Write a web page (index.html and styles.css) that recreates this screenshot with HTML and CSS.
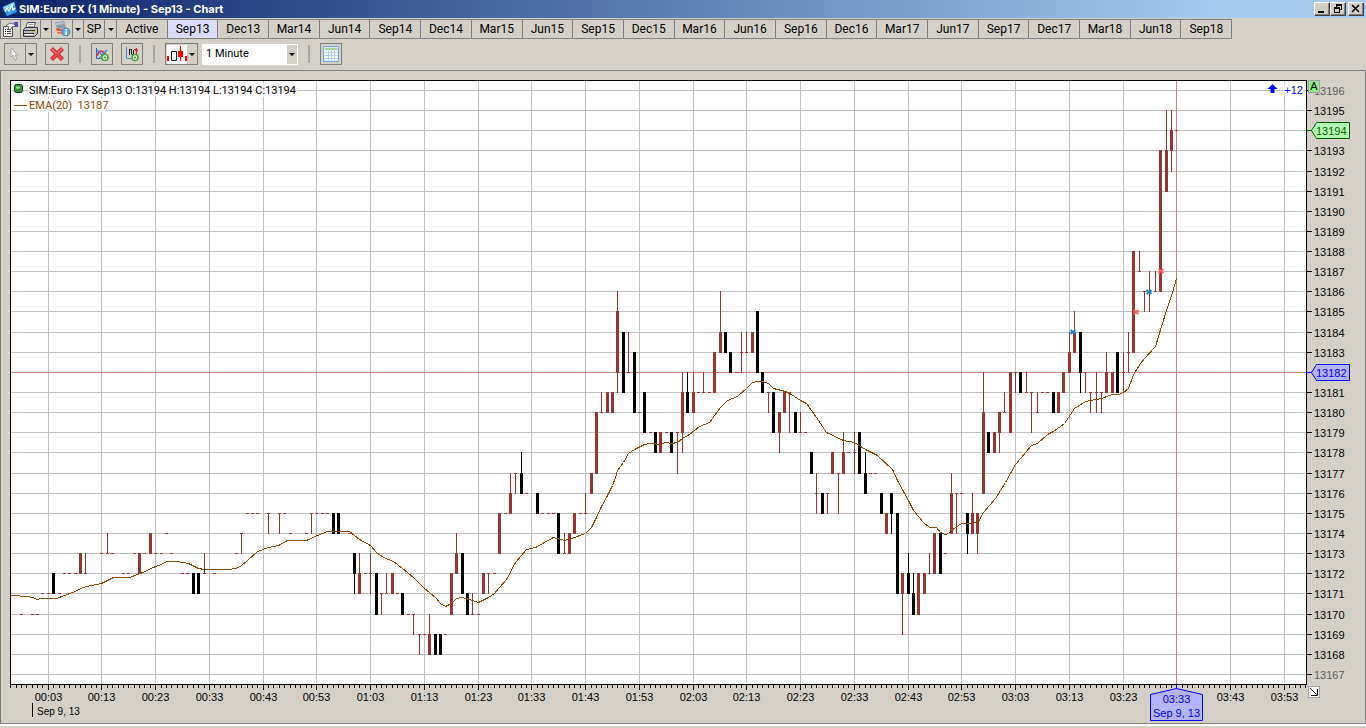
FILE: index.html
```html
<!DOCTYPE html>
<html lang="en">
<head>
<meta charset="utf-8">
<title>SIM:Euro FX (1 Minute) - Sep13 - Chart</title>
<link rel="stylesheet" href="styles.css">
</head>
<body>
<header class="titlebar">
  <svg class="app-icon" width="16" height="16" viewBox="0 0 16 16" aria-hidden="true">
    <path d="M1 6 12 1l3 10-10 4z" fill="#2f9fe8"/>
    <path d="M1 6 12 1l1 3-11 6z" fill="#7cd0ff"/>
    <path d="M3 11l2-4 2 3 3-6 1 5 2-2" fill="none" stroke="#fff" stroke-width="1.3"/>
  </svg>
  <h1 class="title">SIM:Euro FX (1 Minute) - Sep13 - Chart</h1>
  <div class="window-controls">
    <button class="win-btn" type="button" aria-label="Minimize"><svg width="12" height="10" viewBox="0 0 12 10"><path d="M2 7h6v2H2z"/></svg></button>
    <button class="win-btn" type="button" aria-label="Restore"><svg width="12" height="10" viewBox="0 0 12 10"><path d="M4 0h6v6H8V5h1V2H5v1H4zM2 3h6v6H2zM3 5v3h4V5z" fill-rule="evenodd"/></svg></button>
    <button class="win-btn win-close" type="button" aria-label="Close"><svg width="12" height="10" viewBox="0 0 12 10"><path d="M2 1l7 7M9 1L2 8" stroke="#000" stroke-width="1.6"/></svg></button>
  </div>
</header>

<nav class="contract-bar">
  <button class="cell icon-cell" type="button" aria-label="Properties">
    <svg width="17" height="17" viewBox="0 0 17 17">
      <path d="M1.500 5.500h9v10h-9z" fill="#fff" stroke="#555"/>
      <path d="M3 8.500h1m1 0h4M3 10.500h1m1 0h4M3 12.500h1m1 0h4" stroke="#444"/>
      <path d="M4 5l4-3 4 1 2 2-4 1-2 3-2-1 1-2z" fill="#fff" stroke="#444" stroke-width=".8"/>
      <path d="M12 1h4v5h-3z" fill="#4a4fb5"/>
    </svg>
  </button>
  <button class="cell icon-cell printer" type="button" aria-label="Print">
    <svg width="17" height="17" viewBox="0 0 17 17">
      <path d="M5.500 1.500h8l-2 6h-8z" fill="#fff" stroke="#555"/>
      <path d="M6.500 3.500h5M6 5.500h5" stroke="#999"/>
      <path d="M1.500 8.500l2-2h12v6l-3 3h-11z" fill="#bcbcbc" stroke="#333"/>
      <path d="M2 9.500h11M2 12.500h10" stroke="#333"/>
      <path d="M3 13h8v1H3z" fill="#fff"/><path d="M10 10.500h2" stroke="#d9b91a"/>
    </svg>
  </button>
  <button class="cell drop" type="button" aria-label="Print options"><span class="caret"></span></button>
  <button class="cell icon-cell wide" type="button" aria-label="Data">
    <svg width="18" height="18" viewBox="0 0 18 18">
      <path d="M2 2l9-1 2 7-9 1z" fill="#8c9aab"/><path d="M3 3l7-1 1 2-8 1z" fill="#b9c6d4"/>
      <path d="M3 9c3-2 5 2 8 0l1 2c-3 2-5-2-8 0z" fill="#e33d25"/>
      <path d="M4 12c3-2 5 2 8 0l1 2c-3 2-5-2-8 0z" fill="#f06d42"/>
      <circle cx="13" cy="12" r="4" fill="#65a9e8" stroke="#2a6fc0" stroke-width=".6"/>
      <path d="M12.500 9h1.600v1.500h-1.600zM12.200 11.500h1.800V15h-1.800z" fill="#fff"/>
    </svg>
  </button>
  <button class="cell drop" type="button" aria-label="Data options"><span class="caret"></span></button>
  <button class="cell sp" type="button">SP</button>
  <button class="cell drop last" type="button" aria-label="SP options"><span class="caret"></span></button>
  <div class="tabs">
    <button class="tab" type="button">Active</button>
    <button class="tab selected" type="button">Sep13</button>
    <button class="tab" type="button">Dec13</button>
    <button class="tab" type="button">Mar14</button>
    <button class="tab" type="button">Jun14</button>
    <button class="tab" type="button">Sep14</button>
    <button class="tab" type="button">Dec14</button>
    <button class="tab" type="button">Mar15</button>
    <button class="tab" type="button">Jun15</button>
    <button class="tab" type="button">Sep15</button>
    <button class="tab" type="button">Dec15</button>
    <button class="tab" type="button">Mar16</button>
    <button class="tab" type="button">Jun16</button>
    <button class="tab" type="button">Sep16</button>
    <button class="tab" type="button">Dec16</button>
    <button class="tab" type="button">Mar17</button>
    <button class="tab" type="button">Jun17</button>
    <button class="tab" type="button">Sep17</button>
    <button class="tab" type="button">Dec17</button>
    <button class="tab" type="button">Mar18</button>
    <button class="tab" type="button">Jun18</button>
    <button class="tab" type="button">Sep18</button>
  </div>
</nav>

<div class="toolbar">
  <div class="group">
    <button class="tool" type="button" aria-label="Pointer">
      <svg width="18" height="18" viewBox="0 0 18 18"><path d="M5 3v9l2-2 2 5 2-1-2-4h3z" fill="#fff" stroke="#a5a5a5"/></svg>
    </button>
    <button class="tool tool-drop" type="button" aria-label="Pointer options"><span class="caret"></span></button>
  </div>
  <button class="tool delete" type="button" aria-label="Delete">
    <svg width="16" height="16" viewBox="0 0 16 16">
      <path d="M2.500 2.500l11 11M13.500 2.500l-11 11" stroke="#b82020" stroke-width="4.200"/>
      <path d="M2.800 2.800l10.400 10.400M13.200 2.800L2.800 13.200" stroke="#f04848" stroke-width="2.800"/>
      <path d="M3 3.500l4 3.500M13 3L9 6.500" stroke="#ff8a80"/>
    </svg>
  </button>
  <span class="divider"></span>
  <button class="tool indicator" type="button" aria-label="Add indicator">
    <svg width="16" height="16" viewBox="0 0 16 16">
      <path d="M2.500 2v10.500H13" fill="none" stroke="#2867c6"/>
      <path d="M3 10c2-6 5-7 10 0" fill="none" stroke="#e03333" stroke-width="1.800"/>
      <path d="M3 4l5 5 5-5" fill="none" stroke="#3b86e0" stroke-width="1.500"/>
      <path d="M5 12l4-4" stroke="#3b86e0"/>
      <circle cx="11" cy="11.500" r="3" fill="#fff" stroke="#4da03c" stroke-width="1.500"/>
      <path d="M9.500 11.500h3M11 10v3" stroke="#4da03c"/>
    </svg>
  </button>
  <button class="tool overlay" type="button" aria-label="Add overlay">
    <svg width="16" height="16" viewBox="0 0 16 16">
      <path d="M2.500 1v11.500H12" fill="none" stroke="#4c86d2"/>
      <path d="M5.500 3v6M7.500 3v5M5 3.500h3M7.500 8.500h2M9.500 4v6" fill="none" stroke="#222"/>
      <path d="M12.500 2v7M11 4.500h3M10 3.500h3" stroke="#c62828" stroke-width="1.200"/>
      <circle cx="11" cy="11.500" r="3" fill="#fff" stroke="#4da03c" stroke-width="1.500"/>
      <path d="M9.500 11.500h3M11 10v3" stroke="#4da03c"/>
    </svg>
  </button>
  <span class="divider second"></span>
  <div class="group">
    <button class="tool candle" type="button" aria-label="Candlesticks">
      <svg width="20" height="19" viewBox="0 0 20 19">
        <path fill="#fff" d="M0 0h20v19H0z"/>
        <path d="M0 11h2v5H0zM18 11h2v5h-2z" fill="red"/>
        <path d="M4.500 6.500h5v9h-5z" fill="#fff" stroke="#222"/>
        <path d="M11 6h5v6h-5zM13 1h1v15h-1z" fill="red"/>
      </svg>
    </button>
    <button class="tool tool-drop" type="button" aria-label="Chart styles"><span class="caret"></span></button>
  </div>
  <div class="period">
    <label class="sr-only" for="period">Bar period</label>
    <select id="period"><option>1 Minute</option></select>
    <span class="period-arrow"><span class="caret"></span></span>
  </div>
  <span class="divider third"></span>
  <button class="tool table" type="button" aria-label="Data table">
    <svg width="16" height="16" viewBox="0 0 16 16">
      <path d="M.5.5h15v15H.5z" fill="#d9ebfb" stroke="#78a9dc"/>
      <path d="M2 2h12v2H2z" fill="#a4d69a"/>
      <path d="M2 5h12v9H2z" fill="#fff"/>
      <path d="M2 6.500h12M2 9.500h12M2 12.500h12M5.500 5v9M8.500 5v9M11.500 5v9" stroke="#b4d0ec"/>
    </svg>
  </button>
</div>

<main class="chart-panel">
  <svg class="chart" id="chart" role="img" aria-label="Euro FX Sep13 one minute candlestick chart"></svg>
  <button class="auto-scale" type="button">A</button>
  <button class="resize" type="button" aria-label="Fit chart">
    <svg width="10" height="10" viewBox="0 0 10 10"><path d="M1 1l6.500 6.500M8.500 2v6.500H2" fill="none" stroke="#000"/></svg>
  </button>
</main>
<script src="chart.js"></script>
</body>
</html>
```

FILE: styles.css
```css
* { box-sizing: border-box; }

body {
  margin: 0;
  height: 100vh;
  display: flex;
  flex-direction: column;
  overflow: hidden;
  background: #d4d0c8;
  color: #000;
  font: 11px/14px "Liberation Sans", Arial, sans-serif;
}

button {
  margin: 0;
  padding: 0;
  border: 0;
  background: none;
  color: inherit;
  font: inherit;
  display: flex;
  align-items: center;
  justify-content: center;
}

.titlebar {
  flex: none;
  height: 18px;
  display: flex;
  align-items: center;
  padding: 0 2px;
  background: linear-gradient(to right, #0a246a, #a6caf0 90%);
}
.title {
  flex: 1;
  margin: 0 0 0 1px;
  color: #fff;
  font: bold 11px/18px Inter, sans-serif;
}
.window-controls { display: flex; }
.win-btn {
  width: 16px;
  height: 14px;
  background: #d4d0c8;
  border: 1px solid;
  border-color: #fff #404040 #404040 #fff;
  box-shadow: inset -1px -1px #808080;
}
.win-close { margin-left: 2px; }

.contract-bar {
  flex: none;
  display: flex;
  height: 20px;
  margin: 1px 0 3px;
}
.cell, .tab {
  border: 1px solid #808080;
  border-right-width: 0;
}
.icon-cell { width: 20px; }
.icon-cell.wide { width: 21px; }
.drop { width: 11px; }
.sp { width: 21px; font: 12px/14px Roboto, sans-serif; }
.caret {
  border: 3px solid transparent;
  border-top-color: #000;
  border-bottom-width: 0;
}
.drop.last { width: 12px; }
.tabs { flex: 0 1 1116px; display: flex; }
.tab { flex: 1; font: 12px/14px Roboto, sans-serif; min-width: 0; }
.tab:last-child { border-right-width: 1px; }
.tab.selected { background: #dcdcfa; }

.toolbar {
  flex: none;
  display: flex;
  align-items: center;
  height: 28px;
  padding: 0 4px 4px;
}
.group { display: flex; }
.tool {
  width: 22px;
  height: 22px;
  border: 1px solid #808080;
}
.tool-drop { width: 11px; border-left: 0; }
.delete { width: 24px; margin-left: 8px; }
.divider {
  width: 2px;
  height: 18px;
  margin-left: 10px;
  background: #a9a9a9;
}
.indicator { margin-left: 10px; }
.overlay { margin-left: 8px; }
.candle { border-right: 0; }
.second + .group { margin-left: 10px; }
.period {
  display: flex;
  width: 96px;
  height: 21px;
  margin-left: 4px;
  position: relative;
}
.period select {
  flex: 1;
  appearance: none;
  border: 0;
  border-radius: 0;
  padding: 0 4px;
  background: #fff;
  font: 11px/14px Roboto, sans-serif;
  color: #000;
}
.period-arrow {
  position: absolute;
  top: 1px;
  right: 1px;
  bottom: 1px;
  width: 10px;
  background: #d4d0c8;
  display: flex;
  align-items: center;
  justify-content: center;
  pointer-events: none;
}
.table { margin-left: 10px; }
.sr-only {
  position: absolute;
  width: 1px;
  height: 1px;
  opacity: 0;
  white-space: nowrap;
}

.chart-panel {
  flex: 1;
  min-height: 0;
  position: relative;
  margin-bottom: 4px;
  border: 1px solid #808080;
  box-shadow: 0 2px #fff;
}
.chart { display: block; width: 100%; height: 100%; }
.chart text { font: 11px "Liberation Sans", Arial, sans-serif; }
.chart text.date { font-size: 10px; }
.chart text.legend { font-family: Roboto, sans-serif; }
.grid { stroke: #c0c0c0; fill: none; }
.axis { stroke: #000; fill: none; }
.cross { stroke: #d08080; fill: none; }
.up { stroke: #943634; fill: none; }
.down { stroke: #000; fill: none; }
.body { stroke-width: 3; }
.ema { stroke: #8f4a0b; fill: none; }
.ema-text { fill: #8f4a0b; }
.edge { fill: #606060; }
.veil { fill: #fff; fill-opacity: .75; }
.tag-last { fill: #b4ffb4; stroke: #006400; }
.tag-last-text { fill: #006400; }
.tag-cursor { fill: #b4b4ff; stroke: #00f; }
.cursor-text { fill: #00f; }
.mark-buy { stroke: #1a80b8; stroke-width: 2; }
.mark-sell { stroke: #ff5c5c; stroke-width: 2; }

.auto-scale {
  position: absolute;
  top: 9px;
  right: 45px;
  width: 12px;
  height: 13px;
  background: #90ee90;
  border: 1px solid #a0a0a0;
  line-height: 11px;
}
.resize {
  position: absolute;
  right: 45px;
  bottom: 25px;
  width: 12px;
  height: 12px;
  background: #fff;
  border: 1px solid #a0a0a0;
}
```

FILE: chart.js
```js
// Candles as "minute high low open close", minutes counted from 00:03,
// prices as ticks above 13100. A lone price is a flat bar.
const candles = `
-5 70;-3 70;-2 70;-1 71;0 71;1 72 71 72 71;2 71;3 72;4 72;5 72;6 73 72 72 73;7 73 72 72 72;
10 73;11 74 73 73 73;12 73;14 72;15 72;16 73;17 73 72 72 73;18 73;19 74 73 73 74;20 73;21 73;22 74;23 73;
25 72;26 72;27 72 71 72 71;28 72 71 72 71;29 73 72 72 72;31 72;35 73;36 74 73 74 74;37 75;38 75;39 75;
41 75 74 75 75;43 75 74 75 75;44 75;45 74;48 74;49 75 74 75 75;50 75;51 75;52 75;53 75 74 75 74;54 75 74 75 74;56 74;
57 73 71 73 72;58 73 71 71 72;59 72;60 73 71 72 72;61 72 70 72 70;62 71 70 71 71;63 72 71 71 71;64 72 71 71 72;65 71;
66 71 70 71 70;67 70;68 70 69 70 70;69 69 68 69 69;70 69;71 70 68 68 69;72 69 68 69 68;73 69 68 69 68;74 69;
75 72 70 70 72;76 74 72 72 73;77 73 71 73 71;78 71 70 71 70;79 71 70 70 70;80 70;81 72 71 71 72;82 72 71 72 72;83 72;
84 75 73 73 75;85 75;86 77 75 75 76;87 77 76 77 77;88 78 76 77 76;89 76;91 76 75 76 75;92 75;93 75;94 75;
95 75 73 75 73;96 74 73 73 73;97 74 73 73 74;98 75 74 74 75;99 75;100 76 75 75 75;101 77 76 76 77;102 80 77 77 80;
103 81 80 80 80;104 81 80 80 81;105 81 80 80 81;106 86 81 82 85;107 84 81 84 81;108 84 82 82 82;109 83 80 83 80;110 80;
111 81 79 81 79;112 79;113 79 78 79 78;114 79 78 78 79;115 79;116 79 78 79 78;117 79 77 79 79;118 82 78 79 81;
119 82 80 81 80;120 82 80 80 81;121 81;122 82 81 81 81;123 81;124 83 81 81 83;125 86 83 83 84;126 84 83 84 83;
127 83 82 83 82;128 82;129 84 82 83 83;130 84 83 83 83;131 84 83 83 84;132 85 82 85 82;133 82 81 82 81;134 81 80 81 81;
135 81 79 81 79;136 80 78 79 80;137 81 80 80 81;138 81 79 81 81;139 80 79 80 79;140 80 79 79 79;141 79;142 78 77 78 77;
143 77 75 76 76;144 76 75 76 75;145 76 75 76 76;146 78 77 77 78;147 77 75 77 77;148 79 77 77 78;149 78;150 79 77 78 78;
151 79 77 79 77;152 78 76 77 76;153 77;154 77;155 76 75 76 75;156 75 74 74 75;157 76 74 76 75;158 75 71 75 71;
159 72 69 71 72;160 73 71 72 71;161 72 70 71 70;162 72 70 70 72;163 72 71 71 72;164 73 72 72 72;165 74 72 72 74;
166 74 72 74 72;167 73;168 77 74 74 76;169 76 74 76 76;170 76;171 75 73 75 74;172 76 74 74 75;173 75 73 74 75;
174 82 76 76 80;175 79 78 79 78;176 79 78 78 79;177 80 78 79 80;178 81 80 80 80;179 82 79 79 82;180 82 81 82 82;
181 82 81 82 81;182 82 81 81 81;183 81 79 81 81;184 81 80 80 80;185 81;186 81;187 81 80 81 80;188 81 80 80 81;
189 82 81 81 82;190 84 82 82 83;191 85 83 83 84;192 84 81 84 82;193 82 81 82 82;194 81 80 81 81;195 82 80 81 81;
196 81 80 81 81;197 83 81 81 82;198 82 81 81 82;199 83 81 83 81;200 83 81 82 82;201 84 82 83 83;202 88 83 83 88;
203 88 87 87 87;204 86 85 86 86;205 87 85 86 86;206 87 86 86 86;207 93 86 86 93;208 95 91 91 93;209 95 92 93 94;210 94
`.trim().split(';').map(row => {
  const [minute, high, low = high, open = high, close = high] = row.trim().split(' ').map(Number);
  return { minute, high, low, open, close };
});

// EMA(20) line, in pixels of the window area
const ema = `11,595 27,596 32,597 37,599 40,598 56,598 64,595 75,591 80,588 86,586 101,583 113,577 129,577 145,571
150,568 161,564 166,561 176,561 182,562 188,563 198,568 204,569 227,569 236,568 241,565 247,560 257,551 268,547
278,545 287,540 306,540 317,535 327,531 349,531 359,539 370,545 376,552 383,557 393,561 402,568 413,577 424,588
435,597 440,603 445,606 451,603 456,598 462,597 472,600 478,602 488,597 494,593 499,587 506,579 515,562 526,549
535,547 553,537 564,540 574,537 585,533 591,527 596,517 601,506 607,495 612,485 615,477 617,470 623,462 628,453
634,449 644,444 650,443 660,444 665,442 671,443 677,442 682,438 689,434 699,426 709,422 720,407 727,400 737,396
746,388 752,382 757,381 762,381 768,383 773,388 785,391 791,394 800,400 806,403 811,410 816,417 826,432 843,440
854,442 865,449 877,455 892,469 897,480 903,491 908,500 913,510 923,522 929,527 936,527 940,532 945,534 948,533
951,530 961,523 972,523 978,521 983,512 995,498 1005,482 1015,464 1031,445 1037,443 1047,434 1053,431 1064,423
1074,408 1085,401 1101,398 1112,394 1118,394 1123,392 1128,388 1133,374 1140,363 1144,358 1155,346 1161,326
1166,310 1172,292 1176,278`;

const svg = document.getElementById('chart');
const TOP_MARGIN = 71;

const timeX = minute => Math.floor(48.255 + 5.374 * minute) + 0.5;
const priceY = tick => Math.floor(90.47 + 20.138 * (96 - tick)) + 0.5;

function clock(minute) {
  const total = minute + 3;
  const pad = n => String(n).padStart(2, '0');
  return pad(Math.floor(total / 60)) + ':' + pad(total % 60);
}

function draw() {
  const right = svg.clientWidth - 57.5;
  const bottom = svg.clientHeight + TOP_MARGIN - 38 - 0.5;
  const left = 10.5;
  const top = 80.5;
  const out = [];
  const path = (cls, d) => out.push(`<path class="${cls}" d="${d}"/>`);
  const text = (x, y, s, cls = '', anchor = 'start') =>
    out.push(`<text x="${x}" y="${y}" class="${cls}" text-anchor="${anchor}">${s}</text>`);

  out.push('<g transform="translate(-1 -71)">');
  out.push('<g shape-rendering="crispEdges">');
  out.push(`<rect x="${left}" y="${top}" width="${right - left}" height="${bottom - top}" fill="#fff"/>`);

  let grid = '';
  for (let m = 0; timeX(m) < right; m += 10) grid += `M${timeX(m)} ${top}V${bottom}`;
  for (let t = 96; priceY(t) < bottom; t--) grid += `M${left} ${priceY(t)}H${right}`;
  path('grid', grid);
  path('cross', `M${left} ${priceY(82)}H${right}M${timeX(210)} ${top}V${bottom}`);

  for (const c of candles) {
    const x = timeX(c.minute);
    const cls = c.close < c.open ? 'down' : 'up';
    if (c.high !== c.low) path(cls, `M${x} ${priceY(c.high) - 0.5}V${priceY(c.low) + 0.5}`);
    if (c.open === c.close) {
      path(cls, `M${x - 1.5} ${priceY(c.open)}h3`);
    } else {
      const hi = Math.max(c.open, c.close);
      const lo = Math.min(c.open, c.close);
      path(cls + ' body', `M${x} ${priceY(hi) - 0.5}V${priceY(lo) + 0.5}`);
    }
  }
  out.push(`<polyline class="ema" points="${ema}" transform="translate(.5 .5)"/>`);

  let axis = `M${left} ${bottom}V${top}H${right}V${bottom}H${left}`;
  for (let m = -7; timeX(m) < right; m++) axis += `M${timeX(m)} ${bottom}v${m % 10 === 0 ? 5 : 3}`;
  for (let t = 96; priceY(t) < bottom; t--) axis += `M${right} ${priceY(t)}h5`;
  path('axis', axis);
  path('axis', 'M32.5 703V717');
  out.push('</g>');

  for (const [cls, x, y] of [['mark-buy', 1073, 332], ['mark-sell', 1136, 312], ['mark-buy', 1149, 292], ['mark-sell', 1161, 271]]) {
    path(cls, `M${x - 2.5} ${y - 2}l5 4M${x + 2.5} ${y - 2}l-5 4`);
  }

  for (let t = 96; priceY(t) < bottom; t--) {
    if (t !== 94 && t !== 82) text(1314, priceY(t) + 4, 13100 + t, t === 96 || t === 67 ? 'edge' : '');
  }
  for (let m = 0; timeX(m) < right; m += 10) {
    if (m !== 210) text(timeX(m), bottom + 16, clock(m), '', 'middle');
  }
  text(37, bottom + 30, 'Sep 9, 13', 'date');

  const tag = (tick, shape, label) => {
    const y = priceY(tick);
    path(shape, `M${right} ${y}h5l5 -8h33v16h-33l-5 -8`);
    text(1316, y + 4, 13100 + tick, label);
  };
  tag(94, 'tag-last', 'tag-last-text');
  tag(82, 'tag-cursor', 'cursor-text');

  const cx = timeX(210);
  path('tag-cursor', `M${cx} ${bottom}v4l26 6v26h-52v-26l26 -6`);
  text(cx, bottom + 18, clock(210), 'cursor-text', 'middle');
  text(cx, bottom + 32, 'Sep 9, 13', 'cursor-text', 'middle');

  out.push('<rect class="veil" x="28" y="83" width="270" height="14"/>');
  out.push('<rect class="veil" x="28" y="98" width="80" height="14"/>');
  out.push('<rect class="veil" x="1284" y="83" width="19" height="14"/>');
  out.push('<rect x="14.500" y="84.500" width="8" height="8" rx="2" fill="#2f8f2f" stroke="#123d12"/><path d="M16 86.500h4v2h-4z" fill="#a5dca5"/>');
  text(29, 94, 'SIM:Euro FX Sep13 O:13194 H:13194 L:13194 C:13194', 'legend');
  path('ema', 'M14 105.500H27');
  text(29, 109, 'EMA(20)&#160; 13187', 'ema-text legend');
  path('cursor-text', 'M1272.500 84l5 5h-3v4h-4v-4h-3z');
  text(1303, 94, '+12', 'cursor-text', 'end');
  out.push('</g>');
  svg.innerHTML = out.join('');
}

draw();
window.addEventListener('resize', draw);
```
